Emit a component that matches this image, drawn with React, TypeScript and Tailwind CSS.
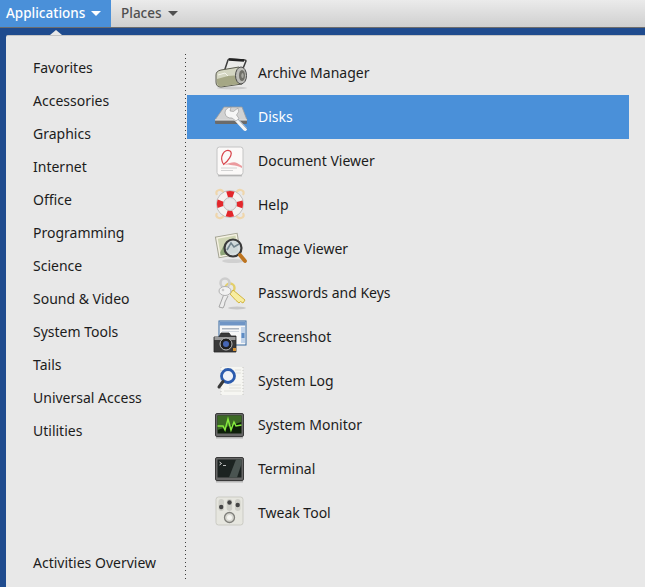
import React from "react";

const Svg = ({ children }: { children: React.ReactNode }) => (
  <svg width="34" height="34" viewBox="0 0 34 34" className="shrink-0 overflow-visible">{children}</svg>
);

const Archive = () => (
  <Svg>
    <path d="M9 16 L13 4 Q13.500 3 15 3 L30 4 Q31 4 31 5 L27 15" fill="#f0f0ec" fillOpacity="0.4" stroke="#3d3d3d" strokeWidth="1.500" strokeLinejoin="round" />
    <path d="M14 3.500 L29 4.500" stroke="#222" strokeWidth="2.400" />
    <ellipse cx="17" cy="32" rx="15" ry="1.500" fill="#000" opacity="0.12" />
    <path d="M1 19 Q1 15 6 14 L24 11 L27 28 L6 31 Q1 31 1 26 Z" fill="#d4d6c2" stroke="#5c5d50" strokeWidth="1" />
    <path d="M2 23 L13 20 L26 19 L26.500 27.500 L6 30.500 Q2 30.500 2 26 Z" fill="#a5a785" />
    <path d="M3 19 L10 17 L13 20" fill="none" stroke="#f4f4ec" strokeWidth="1" />
    <ellipse cx="26" cy="19.500" rx="5.500" ry="8.500" fill="#bdbdb8" stroke="#4a4a4a" strokeWidth="1" />
    <ellipse cx="27" cy="19.500" rx="3" ry="5.500" fill="#6f6f68" />
    <ellipse cx="27.500" cy="19.500" rx="1.200" ry="2.500" fill="#a9a9a2" />
  </Svg>
);

const Disks = () => (
  <Svg>
    <path d="M9 7 L27 7 L32 20 L0 20 Z" fill="#d2d2d2" stroke="#9a9a9a" strokeWidth="0.800" />
    <path d="M0 20 L32 20 L32 23 Q32 24 31 24 L1 24 Q0 24 0 23 Z" fill="#6b6b6b" />
    <path d="M0 20 H32" stroke="#f4f4f4" strokeWidth="1" />
    <path d="M18 16 L30 29" stroke="#f4f4f4" strokeWidth="4" strokeLinecap="round" />
    <path d="M20.500 16.500 L32 29" stroke="#7f93a8" strokeWidth="0.800" />
    <path d="M16 7 Q10 8 10 13 Q11 18.500 17 18 L21 21 L24 18.500 L21.500 15 Q25 12 23 8 L18.500 11.500 L15 11 Z" fill="#f6f6f6" stroke="#808080" strokeWidth="0.500" />
  </Svg>
);

const Doc = () => (
  <Svg>
    <rect x="2" y="3" width="26" height="28" rx="2.500" fill="#fbf9f8" stroke="#c4c4c4" />
    <path d="M9 21 C3 13 10 4 15 7 C19 10 12 18 9 20" fill="none" stroke="#d7434a" strokeWidth="1.200" />
    <path d="M9 20 C15 20 18 17 22 19 L27 22 L27 24 C20 20 15 22 9 20 Z" fill="#eb9a9e" />
    <path d="M6 24 H22 M6 26.500 H18" stroke="#d2d2d2" strokeWidth="1" />
    <rect x="3" y="31" width="24" height="1.500" fill="#000" opacity="0.16" />
  </Svg>
);

const Help = () => (
  <Svg>
    <path d="M2 7 Q0 3 4 2 Q7 1 9 5 M28 7 Q30 3 26 2 Q23 1 21 5 M2 25 Q0 29 4 30 Q7 31 9 27 M28 25 Q30 29 26 30 Q23 31 21 27" fill="none" stroke="#efd6ac" strokeWidth="2.200" />
    <circle cx="15" cy="16" r="10" fill="none" stroke="#f4f2f0" strokeWidth="7" />
    <circle cx="15" cy="16" r="13.500" fill="none" stroke="#a9a9a9" strokeWidth="0.700" />
    <circle cx="15" cy="16" r="6.500" fill="none" stroke="#a9a9a9" strokeWidth="0.700" />
    <circle cx="15" cy="16" r="10" fill="none" stroke="#e3272c" strokeWidth="6" strokeDasharray="6.500 9.208" strokeDashoffset="3.250" />
  </Svg>
);

const ImageV = () => (
  <Svg>
    <g transform="rotate(-10 13 13)">
      <rect x="2" y="3" width="22" height="21" fill="#f4f1e2" stroke="#a3a392" />
      <rect x="4" y="5" width="18" height="17" fill="#cfd5b4" />
      <path d="M4 19 L10 11 L14 16 L22 10 V22 H4 Z" fill="#8fa67a" />
    </g>
    <ellipse cx="18" cy="29" rx="11" ry="2" fill="#000" opacity="0.1" />
    <circle cx="18" cy="16" r="8.500" fill="#d6dee2" fillOpacity="0.9" stroke="#3a3a3a" strokeWidth="2.200" />
    <path d="M12 18 L16 11 L19 15 L24 12" fill="none" stroke="#73858e" strokeWidth="1.600" />
    <path d="M25 23 L30 29" stroke="#bd741f" strokeWidth="3.800" strokeLinecap="round" />
  </Svg>
);

const Keys = () => (
  <Svg>
    <ellipse cx="22" cy="32" rx="9" ry="1.500" fill="#000" opacity="0.14" />
    <circle cx="15" cy="12" r="4.500" fill="none" stroke="#e3cf6a" strokeWidth="2.400" />
    <path d="M18 14 L30 24 L28 27 L25.500 25.500 L24 27 L21 24.500 L15 18 Z" fill="#f8eda0" stroke="#d2b53f" strokeWidth="1" />
    <circle cx="10" cy="7" r="4.500" fill="none" stroke="#cdcdcd" strokeWidth="2.600" />
    <path d="M9 18 L4 31 L8 32 L9.500 29 L10 26 L13 20" fill="#ececec" stroke="#a5a5a5" strokeWidth="1" />
    <ellipse cx="10" cy="15" rx="6" ry="4.500" fill="#f1f1f1" stroke="#b0b0b0" strokeWidth="1" />
    <circle cx="8" cy="14" r="1.300" fill="#c9c9c9" />
  </Svg>
);

const Shot = () => (
  <Svg>
    <rect x="4" y="1" width="27" height="24" fill="#f7f7f7" stroke="#36699f" strokeWidth="1" />
    <rect x="4.500" y="1.500" width="26" height="4" fill="#6f95c6" />
    <rect x="7" y="8" width="17" height="1.500" fill="#aab3bf" />
    <rect x="7" y="11" width="17" height="1" fill="#d2d7de" />
    <rect x="26" y="7" width="4" height="16" fill="#c2d4ea" />
    <rect x="26.500" y="13" width="3" height="5" fill="#5e8cc4" />
    <path d="M-1 17 H4 L6 13 H14 L16 16 H21 V32 H-1 Z" fill="#393939" stroke="#262626" strokeWidth="0.800" />
    <rect x="-0.500" y="17" width="21" height="3" fill="#9a9a9a" />
    <circle cx="11" cy="24" r="6" fill="#202020" stroke="#bbbbbb" strokeWidth="1" />
    <circle cx="11" cy="24" r="3" fill="#4666b4" />
    <rect x="18" y="28" width="3" height="3" fill="#d59030" />
  </Svg>
);

const Log = () => (
  <Svg>
    <rect x="6" y="3" width="22" height="28" fill="#f6f6f2" />
    <path d="M6 3 V31 M28 3 V31" stroke="#c8c8c2" strokeWidth="1" strokeDasharray="1 2" />
    <path d="M14 21 H26 M14 24 H26 M9 27 H26 M20 6 H26 M21 9 H26" stroke="#e0e0da" strokeWidth="1" />
    <circle cx="13" cy="12" r="6.500" fill="#eef2f8" fillOpacity="0.9" stroke="#2c5cae" strokeWidth="2.800" />
    <path d="M8 17.500 L4 23" stroke="#3a3a3a" strokeWidth="3" strokeLinecap="round" />
  </Svg>
);

const Monitor = () => (
  <Svg>
    <rect x="0.500" y="5.500" width="28" height="23" rx="1.500" fill="#666" stroke="#3a3a3a" />
    <rect x="2.500" y="7.500" width="24" height="18" fill="#0e1f0a" />
    <path d="M2.500 7.500 H26.500 V14 L2.500 22 Z" fill="#3c6a25" />
    <path d="M2.500 18 H8 L10 22 L13 11 L16 22 L19 14 L21 18 L26.500 17" fill="none" stroke="#86ea3e" strokeWidth="1.500" />
    <rect x="1" y="29" width="27" height="1.500" fill="#000" opacity="0.22" />
  </Svg>
);

const Term = () => (
  <Svg>
    <rect x="0.500" y="5.500" width="28" height="23" rx="1.500" fill="#666" stroke="#3a3a3a" />
    <rect x="2.500" y="7.500" width="24" height="18" fill="#1c2321" />
    <path d="M14 25.500 L21 7.500 H26.500 V12 L22 25.500 Z" fill="#4a5451" />
    <path d="M4.500 10 L6.500 11.500 L4.500 13" fill="none" stroke="#e8e8e8" strokeWidth="0.900" />
    <path d="M8 13.500 H11" stroke="#cfcfcf" strokeWidth="0.900" />
    <rect x="1" y="29" width="27" height="1.500" fill="#000" opacity="0.22" />
  </Svg>
);

const Tweak = () => (
  <Svg>
    <rect x="1" y="1" width="27" height="28" rx="2.500" fill="#e6e6df" stroke="#cbcbc4" />
    <rect x="3.500" y="3" width="5.500" height="12" rx="2.700" fill="#cfcfc8" />
    <rect x="11.700" y="3" width="5.500" height="12" rx="2.700" fill="#cfcfc8" />
    <rect x="20" y="3" width="5.500" height="12" rx="2.700" fill="#cfcfc8" />
    <circle cx="6.200" cy="11" r="2.200" fill="#454545" />
    <circle cx="14.500" cy="6.500" r="2.200" fill="#454545" />
    <circle cx="22.700" cy="9" r="2.200" fill="#454545" />
    <circle cx="14.500" cy="21.500" r="5" fill="#d9d9d2" stroke="#7f7f7a" strokeWidth="1.300" />
    <circle cx="14.500" cy="21.500" r="2.500" fill="#f4f4f0" />
  </Svg>
);

const categories = ["Favorites", "Accessories", "Graphics", "Internet", "Office", "Programming", "Science", "Sound & Video", "System Tools", "Tails", "Universal Access", "Utilities"];

const apps: [string, React.FC][] = [
  ["Archive Manager", Archive],
  ["Disks", Disks],
  ["Document Viewer", Doc],
  ["Help", Help],
  ["Image Viewer", ImageV],
  ["Passwords and Keys", Keys],
  ["Screenshot", Shot],
  ["System Log", Log],
  ["System Monitor", Monitor],
  ["Terminal", Term],
  ["Tweak Tool", Tweak],
];

const Caret = ({ className }: { className: string }) => (
  <span className={`ml-[6px] w-0 h-0 border-x-[5px] border-x-transparent border-t-[5px] ${className}`} />
);

export default function App() {
  return (
    <div className="w-[645px] h-[587px] overflow-hidden flex flex-col text-[14px] leading-none text-[#1c1c1c] font-['Noto_Sans',sans-serif]">
      <div className="h-[28px] shrink-0 flex items-stretch text-[13.5px] bg-gradient-to-b from-[#ebebeb] to-[#cfcfcf] border-b border-b-[#6d6d6d]">
        <div className="w-[111px] bg-[#4a90d9] flex items-center pl-[6px] text-white font-medium">
          Applications
          <Caret className="border-t-white" />
        </div>
        <div className="flex items-center pl-[10px] text-[#4f4f4f] font-medium">
          Places
          <Caret className="border-t-[#4f4f4f]" />
        </div>
      </div>
      <div className="relative flex-1 min-h-0 bg-[#1f4b8e] pt-[7px] pl-[6px] flex flex-col">
        <div className="absolute left-[50px] top-[2px] w-0 h-0 border-x-[6px] border-x-transparent border-b-[5px] border-b-[#e8e8e8]" />
        <div className="flex-1 min-h-0 bg-[#e8e8e8] border-t border-t-[#c4c4c4] rounded-tl-[2px] flex">
          <div className="w-[179px] shrink-0 pl-[27px] pt-[15px] pb-[8px] flex flex-col">
            {categories.map((c) => (
              <div key={c} className="h-[33px] flex items-center whitespace-nowrap">{c}</div>
            ))}
            <div className="mt-auto h-[33px] flex items-center whitespace-nowrap">Activities Overview</div>
          </div>
          <div className="mt-[18px] mb-[7px] w-px bg-[linear-gradient(#3c3c3c_1px,transparent_1px)] bg-[length:1px_4px]" />
          <div className="w-[442px] ml-[1px] pt-[15px] flex flex-col">
            {apps.map(([name, Icon]) => (
              <div
                key={name}
                className={`h-[44px] flex items-center pl-[28px] gap-[9px] ${name === "Disks" ? "bg-[#4a90d9] text-white" : ""}`}
              >
                <Icon />
                <span className="whitespace-nowrap">{name}</span>
              </div>
            ))}
          </div>
        </div>
      </div>
    </div>
  );
}
